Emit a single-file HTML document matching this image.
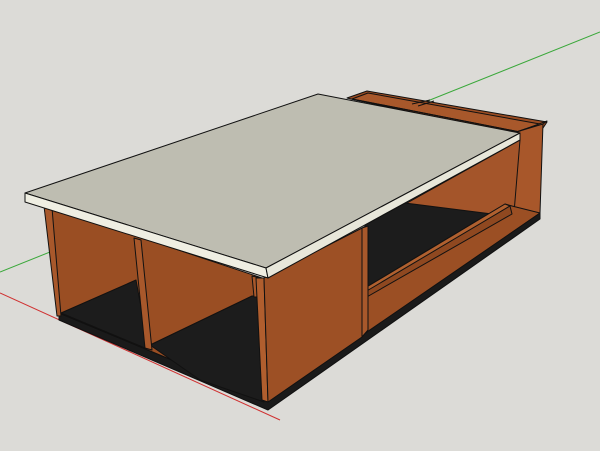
<!DOCTYPE html>
<html><head><style>html,body{margin:0;padding:0;background:#dcdbd7;}svg{display:block}</style></head>
<body>
<svg width="600" height="451" viewBox="0 0 600 451" xmlns="http://www.w3.org/2000/svg">
<rect width="600" height="451" fill="#dcdbd7"/>
<line x1="0" y1="272" x2="600" y2="32" stroke="#3aa83a" stroke-width="1"/>
<line x1="0" y1="293" x2="280" y2="420" stroke="#d03030" stroke-width="1"/>
<g stroke="#111" stroke-width="1" stroke-linejoin="round">
<!-- rear box -->
<polygon points="347,98 367,91 547,122 543,128 520,135 355,100" fill="#9a4c22"/>
<polygon points="352,99 368,93 540,124 520,132" fill="#a8582b"/>
<line x1="352" y1="99" x2="520" y2="132"/>
<line x1="412" y1="104" x2="430" y2="100"/>
<line x1="418" y1="106" x2="434" y2="101"/>
<!-- right end panel -->
<polygon points="513,133 543,123 540,213 512,225" fill="#a8572a"/>
<polygon points="513,133 520,131 547,121 543,124" fill="#b5622f"/>
<!-- back wall of drawer area -->
<polygon points="362,228 520,140 513,225 470,240 362,288" fill="#a4552a"/>
<!-- black drawer interior -->
<polygon points="365,225 405,203 500,215 365,290" fill="#1c1c1c"/>
<!-- drawer lower front panel -->
<polygon points="365,288 505,204 512,206 540,213 365,335" fill="#9b4f24"/>
<polygon points="365,288 505,204 510,206 370,292" fill="#b0602f"/>
<polygon points="365,292 510,206 512,214 365,298" fill="#8f4820"/>
<!-- plinth -->
<polygon points="59,313 268,400 540,213 540,219 268,410 59,320" fill="#1a1a1a"/>
<!-- left region background brown (back walls) -->
<polygon points="44,205 268,280 268,400 59,313" fill="#9a4e23"/>
<!-- floors -->
<polygon points="61,313 136,280 148,345 145,348" fill="#1c1c1c"/>
<polygon points="150,345 252,296 264,296 264,402 200,380" fill="#1c1c1c"/>
<!-- left end panel edge -->
<polygon points="44,206 52,208 61,316 57,316" fill="#a8582b"/>
<!-- divider -->
<polygon points="134,238 141,240 152,350 145,348" fill="#a8582b"/>
<!-- rear divider near corner -->
<polygon points="252,276 260,278 262,297 254,297" fill="#a8582b"/>
<!-- front right panel -->
<polygon points="256,278 264,278 268,402 262,400" fill="#b05e2e"/>
<polygon points="264,278 362,228 362,337 268,402" fill="#9d5025"/>
<polygon points="362,228 368,226 368,330 362,337" fill="#a8582b"/>
<!-- slab -->
<polygon points="25,193 318,94 520,133 266,268" fill="#bebdb1"/>
<polygon points="25,193 266,268 268,278 25,202" fill="#efeee2"/>
<polygon points="266,268 520,133 520,140 268,278" fill="#e8e7da"/>
</g>
</svg>
</body></html>
